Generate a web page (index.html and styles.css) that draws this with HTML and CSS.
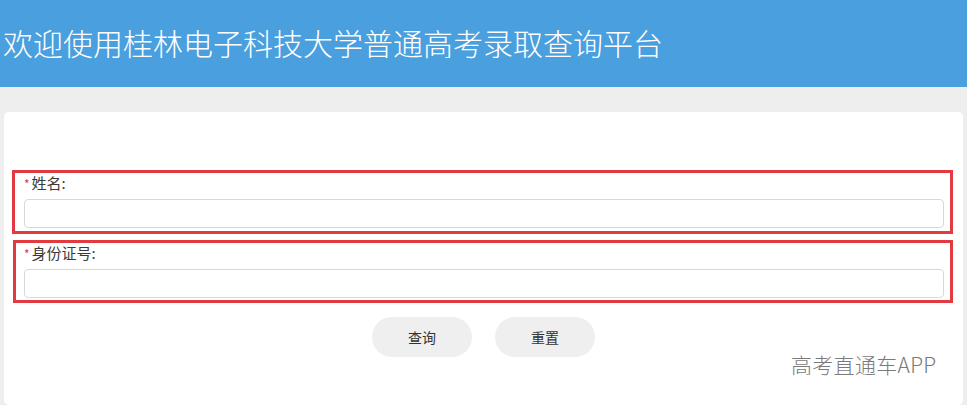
FILE: index.html
```html
<!DOCTYPE html>
<html lang="zh-CN">
<head>
<meta charset="utf-8">
<title>录取查询</title>
<link rel="stylesheet" href="styles.css">
</head>
<body>
<header class="top">欢迎使用桂林电子科技大学普通高考录取查询平台</header>
<main class="wrap">
  <section class="card">
    <div class="field field-first">
      <label class="label"><span class="req">*</span>姓名:</label>
      <input class="input" type="text">
    </div>
    <div class="field field-second">
      <label class="label"><span class="req">*</span>身份证号:</label>
      <input class="input" type="text">
    </div>
    <div class="actions">
      <button class="btn" type="button">查询</button>
      <button class="btn" type="button">重置</button>
    </div>
    <div class="mark">高考直通车APP</div>
  </section>
</main>
</body>
</html>
```

FILE: styles.css
```css
* { box-sizing: border-box; }
html, body { margin: 0; padding: 0; }
body {
  background: #eeeeee;
  font-family: "Noto Sans CJK SC", "Noto Sans", sans-serif;
  color: #333;
  height: 405px;
  overflow: hidden;
}
.top {
  height: 87px;
  background: #4a9fde;
  color: #fff;
  font-size: 30px;
  font-weight: 300;
  line-height: 84px;
  padding-left: 3px;
  letter-spacing: 0;
}
.wrap {
  padding: 25px 4px 0 4px;
}
.card {
  position: relative;
  background: #fff;
  border-radius: 5px;
  padding: 58px 10px 0 8px;
  height: 293px;
}
.field {
  border: 3px solid #e13a40;
  padding: 0 6px 3px 9px;
  display: flex;
  flex-direction: column;
}
.field-second {
  margin-top: 6px;
  margin-left: 1px;
  padding-left: 8px;
  padding-bottom: 2px;
}
.label {
  font-size: 15px;
  font-weight: 400;
  line-height: 20px;
  height: 20px;
  margin-bottom: 6px;
  color: #3a3a3a;
}
.req {
  color: #e13a40;
  font-size: 12px;
  margin-right: 2px;
}
.input {
  height: 29px;
  border: 1px solid #d6d9dc;
  border-radius: 4px;
  background: #fff;
  width: 100%;
  font: inherit;
}
.actions {
  display: flex;
  justify-content: center;
  gap: 23px;
  margin-top: 14px;
  padding-left: 2px;
}
.btn {
  width: 100px;
  height: 40px;
  border: none;
  border-radius: 20px;
  background: #efefef;
  color: #333;
  font-family: inherit;
  font-size: 14px;
  font-weight: 400;
}
.mark {
  position: absolute;
  left: 787px;
  top: 237px;
  font-size: 21px;
  font-weight: 300;
  color: #7a7a7a;
  letter-spacing: 0.3px;
}
```
